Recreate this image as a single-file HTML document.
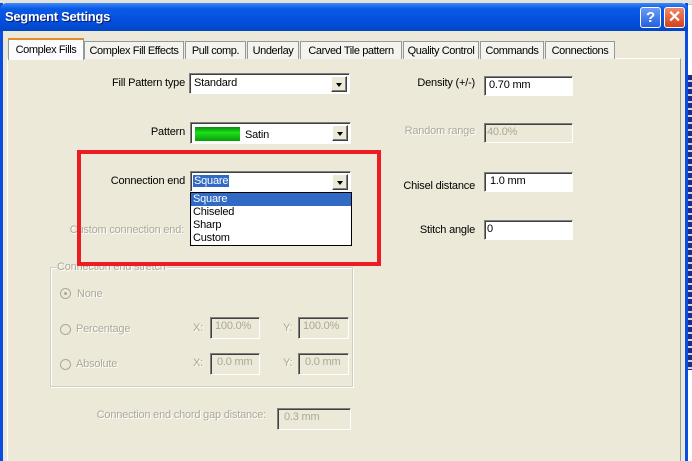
<!DOCTYPE html>
<html><head><meta charset="utf-8"><style>
*{box-sizing:border-box;margin:0;padding:0}
html,body{width:692px;height:461px;overflow:hidden}
body{background:#fff;font-family:"Liberation Sans",sans-serif;font-size:11px;color:#000;position:relative;letter-spacing:-0.2px}
.a{position:absolute}
.lbl{position:absolute;white-space:nowrap;text-align:right}
.dis{color:#aca899;text-shadow:1px 1px 0 #fff}
.box{position:absolute;background:#fff;border:1px solid #7f9db9;border-color:#808080 #fff #fff #808080;box-shadow:inset 1px 1px 0 #404040;padding:2px 0 0 4px;white-space:nowrap}
.box.d{background:#ece9d8;color:#aca899}
.arrow{position:absolute;right:2px;top:2px;width:16px;height:16px;background:#ece9d8;border:1px solid;border-color:#fff #404040 #404040 #fff;box-shadow:inset -1px -1px 0 #808080}
.arrow:after{content:"";position:absolute;left:4px;top:6px;border:3.5px solid transparent;border-top:4px solid #000;border-bottom:0}
.radio{position:absolute;width:11px;height:11px;border-radius:50%;border:1px solid #aca899;background:#ece9d8}
.tab{position:absolute;top:41px;height:18px;padding-top:3px;text-align:center;border:1px solid #919b9c;border-bottom:none;background:#f4f3ee;white-space:nowrap;letter-spacing:-0.4px}
</style></head><body>
<div class="a" style="left:0;top:0;width:692px;height:5px;background:#e4e2dc;border-bottom:1px solid #c8c6c0"></div>
<div class="a" style="left:686px;top:75px;width:6px;height:295px;background:repeating-linear-gradient(#1c2a8c 0 5px,#d0d4e8 5px 7px)"></div>
<div class="a" style="left:0;top:3px;width:688px;height:458px;background:#ece9d8;border-left:3px solid #0a4de0;border-right:3px solid #0a4de0"></div>
<div class="a" style="left:0;top:3px;width:688px;height:28px;background:linear-gradient(#3d8af7 0,#0a5ae6 20%,#0550de 60%,#0046c8 100%);border-radius:7px 7px 0 0"></div>
<div class="a" style="left:5px;top:9px;color:#fff;font-weight:bold;font-size:13px;letter-spacing:-0.3px;text-shadow:1px 1px 0 #0a1a6a">Segment Settings</div>
<div class="a" style="left:640px;top:7px;width:21px;height:21px;border:1px solid #fff;border-radius:3px;background:linear-gradient(#6c9cf8,#2360e0);color:#fff;font-weight:bold;font-size:15px;text-align:center;line-height:19px">?</div>
<div class="a" style="left:664px;top:7px;width:21px;height:21px;border:1px solid #fff;border-radius:3px;background:linear-gradient(#f08a6a,#d2411c);color:#fff;font-weight:bold;font-size:16px;text-align:center;line-height:19px">✕</div>
<div class="a" style="left:7px;top:58px;width:674px;height:420px;border:1px solid;border-color:#fff #919b9c #919b9c #fff"></div>
<div class="tab" style="left:84px;width:100px">Complex Fill Effects</div>
<div class="tab" style="left:185px;width:61px">Pull comp.</div>
<div class="tab" style="left:247px;width:52px">Underlay</div>
<div class="tab" style="left:300px;width:102px">Carved Tile pattern</div>
<div class="tab" style="left:403px;width:76px">Quality Control</div>
<div class="tab" style="left:480px;width:64px">Commands</div>
<div class="tab" style="left:545px;width:70px">Connections</div>
<div class="tab" style="left:8px;top:38px;height:22px;width:76px;background:#fcfcfe;padding-top:4px;border-top:2px solid #e68b2c">Complex Fills</div>

<div class="lbl" style="right:507px;top:77px">Fill Pattern type</div>
<div class="box" style="left:189px;top:73px;width:161px;height:21px;padding-top:3px">Standard<div class="arrow"></div></div>
<div class="lbl" style="right:507px;top:126px">Pattern</div>
<div class="box" style="left:190px;top:122px;width:161px;height:22px;padding-top:4px"><span style="display:inline-block;width:45px;height:14px;vertical-align:-3px;background:linear-gradient(#0a8a0a,#1ce01c 40%,#0a9a0a);margin-right:5px"></span>Satin<div class="arrow"></div></div>

<div class="lbl" style="right:507px;top:175px">Connection end</div>
<div class="box" style="left:190px;top:171px;width:161px;height:21px;padding:3px 0 0 2px"><span style="background:#316ac5;color:#fff;padding:0 1px">Square</span><div class="arrow"></div></div>
<div class="lbl dis" style="right:508px;top:224px">Custom connection end:</div>
<div class="a" style="left:190px;top:192px;width:162px;height:54px;background:#fff;border:1px solid #000">
<div style="background:#316ac5;color:#fff;height:13px;line-height:13px;padding-left:2px">Square</div>
<div style="height:13px;line-height:13px;padding-left:2px">Chiseled</div>
<div style="height:13px;line-height:13px;padding-left:2px">Sharp</div>
<div style="height:13px;line-height:13px;padding-left:2px">Custom</div>
</div>

<div class="a" style="left:50px;top:267px;width:303px;height:120px;border:1px solid #d0d0bf;box-shadow:1px 1px 0 #fff inset,1px 1px 0 #fff"></div>
<div class="a dis" style="left:56px;top:261px;background:#ece9d8;padding:0 1px">Connection end stretch</div>
<div class="a" style="left:77px;top:150px;width:304px;height:116px;border:4px solid #ed1c24"></div>
<div class="radio" style="left:60px;top:288px"><div style="position:absolute;left:3px;top:3px;width:3px;height:3px;background:#aca899;border-radius:50%"></div></div>
<div class="a dis" style="left:77px;top:288px">None</div>
<div class="radio" style="left:60px;top:324px"></div>
<div class="a dis" style="left:76px;top:323px">Percentage</div>
<div class="a dis" style="left:193px;top:322px">X:</div>
<div class="box d" style="left:210px;top:317px;width:50px;height:22px">100.0%</div>
<div class="a dis" style="left:283px;top:322px">Y:</div>
<div class="box d" style="left:298px;top:317px;width:51px;height:22px">100.0%</div>
<div class="radio" style="left:60px;top:359px"></div>
<div class="a dis" style="left:76px;top:358px">Absolute</div>
<div class="a dis" style="left:193px;top:357px">X:</div>
<div class="box d" style="left:210px;top:353px;width:50px;height:22px;padding-left:6px">0.0 mm</div>
<div class="a dis" style="left:283px;top:357px">Y:</div>
<div class="box d" style="left:298px;top:353px;width:51px;height:22px;padding-left:6px">0.0 mm</div>

<div class="lbl dis" style="right:426px;top:409px">Connection end chord gap distance:</div>
<div class="box d" style="left:277px;top:408px;width:74px;height:22px;padding-left:6px">0.3 mm</div>

<div class="lbl" style="right:217px;top:77px">Density (+/-)</div>
<div class="box" style="left:484px;top:76px;width:89px;height:20px">0.70 mm</div>
<div class="lbl dis" style="right:217px;top:125px">Random range</div>
<div class="box d" style="left:484px;top:123px;width:89px;height:20px;padding-left:2px">40.0%</div>
<div class="lbl" style="right:217px;top:180px">Chisel distance</div>
<div class="box" style="left:484px;top:172px;width:89px;height:20px;padding-left:5px">1.0 mm</div>
<div class="lbl" style="right:217px;top:224px">Stitch angle</div>
<div class="box" style="left:484px;top:220px;width:89px;height:20px;padding-left:2px">0</div>
</body></html>
